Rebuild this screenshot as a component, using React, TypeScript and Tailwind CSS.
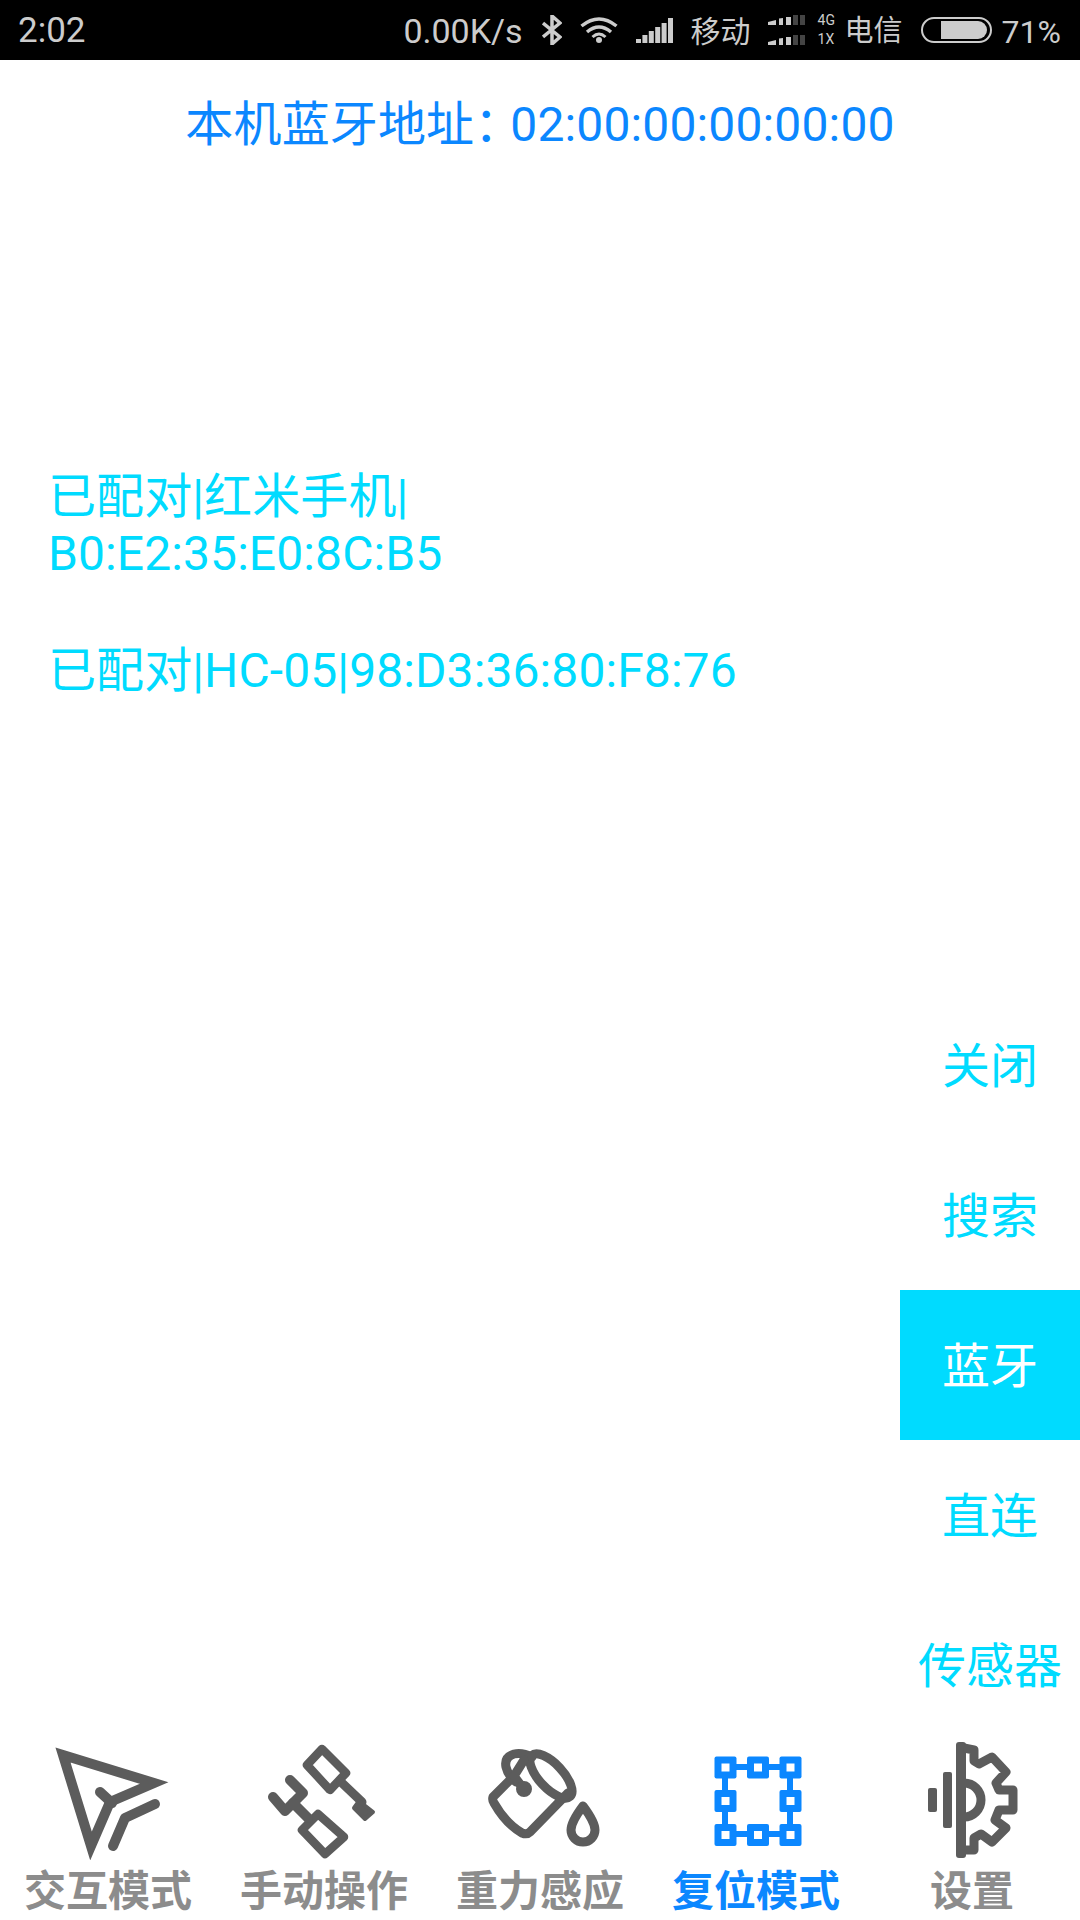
import type { ReactNode } from "react";

const tabs: { label: string; active?: boolean; icon: ReactNode }[] = [
  {
    label: "交互模式",
    icon: (
      <g fill="none" stroke="#5c5c5c" strokeWidth="10">
        <path d="M63 15L154 43L110 62L91 106Z" strokeMiterlimit="10" />
        <path d="M100 52L112 63" strokeLinecap="round" />
        <path d="M155 64L125 78L113 106" strokeLinecap="round" strokeLinejoin="round" />
      </g>
    ),
  },
  {
    label: "手动操作",
    icon: (
      <g fill="none" stroke="#5c5c5c" strokeWidth="8.500" strokeLinecap="round" strokeLinejoin="round">
        <path d="M106 9L130 33L114 50L91 25Z" />
        <path d="M125 42L146 62" strokeWidth="9" />
        <path d="M143 61L157 72L149 79L138 68Z" fill="#5c5c5c" strokeWidth="4" />
        <path d="M102 74L128 97L109 114L86 90Z" />
        <path d="M57 57L69 71L87 53L74 40" strokeWidth="10" />
        <path d="M77 63L92 78" strokeWidth="10" />
      </g>
    ),
  },
  {
    label: "重力感应",
    icon: (
      <g fill="none" stroke="#5c5c5c" strokeWidth="9" strokeLinecap="round" strokeLinejoin="round">
        <ellipse cx="119" cy="36" rx="28" ry="12" transform="rotate(47 119 36)" />
        <path d="M79 39L61 57Q60 60 62 63Q74 84 90 93Q95 95 98 92L136 53" />
        <path d="M100 17Q90 12 82 14Q72 17 74 27Q76 36 84 42" />
        <path d="M92 20L82 36L91 48" />
        <circle cx="92" cy="49" r="4" strokeWidth="8" fill="#5c5c5c" />
        <path d="M151 66Q163 82 163 90A12 12 0 0 1 139 90Q139 82 151 66Z" />
      </g>
    ),
  },
  {
    label: "复位模式",
    active: true,
    icon: (
      <g>
        <rect x="77" y="27" width="65" height="67" fill="none" stroke="#0b87ff" strokeWidth="6" />
        {[77.5, 110, 142.5].map((cx) =>
          [27.5, 61, 95].map((cy) =>
            cx === 110 && cy === 61 ? null : (
              <g key={`${cx}-${cy}`}>
                <rect x={cx - 11} y={cy - 11} width="22" height="22" rx="2" fill="#0b87ff" />
                <rect x={cx - 4} y={cy - 4} width="8" height="8" fill="#ffffff" />
              </g>
            ),
          ),
        )}
      </g>
    ),
  },
  {
    label: "设置",
    icon: (
      <g fill="#5c5c5c">
        <rect x="92" y="2" width="10" height="116" rx="3" />
        <rect x="79" y="32" width="9" height="56" rx="2" />
        <rect x="64" y="48" width="9" height="24" rx="2" />
        <path
          d="M100 8L110 10L110 21L115 24L128 17L142 32L132 43L135 50L149 50L149 70L135 70L131 80L142 88L128 102L117 94L110 98L110 110L100 110"
          fill="none"
          stroke="#5c5c5c"
          strokeWidth="9"
          strokeLinejoin="round"
        />
        <path d="M100 43A16 16 0 0 1 100 77" fill="none" stroke="#5c5c5c" strokeWidth="9" />
      </g>
    ),
  },
];

const sideItems = ["关闭", "搜索", "蓝牙", "直连", "传感器"];

function Bars({ className }: { className?: string }) {
  const heights = [4, 8, 12, 16, 20, 25];
  return (
    <svg viewBox="0 0 37 25" className={className}>
      {heights.map((h, i) => (
        <rect key={i} x={i * 6.4} y={25 - h} width="5" height={h} fill="#cccccc" />
      ))}
    </svg>
  );
}

function MiniBars() {
  return (
    <svg viewBox="0 0 37 10" className="w-[37px] h-[10px]">
      <path d="M0 7L8 5V10H0Z" fill="#cccccc" />
      <path d="M11 3.500L15 3V10H11Z" fill="#cccccc" />
      <rect x="18" y="2" width="5" height="8" fill="#cccccc" />
      <rect x="25" y="0" width="5" height="10" fill="#444444" />
      <rect x="32" y="0" width="5" height="10" fill="#444444" />
    </svg>
  );
}

function StatusBar() {
  return (
    <div className="h-[60px] shrink-0 bg-black text-[#cccccc] flex items-center justify-between pl-[18px] pr-[19px]">
      <span className="text-[35px] pt-[3px]">2:02</span>
      <div className="flex items-center">
        <span className="text-[34px] pt-[3px]">0.00K/s</span>
        <svg viewBox="0 0 20 30" className="w-[20px] h-[30px] ml-[19px]" fill="none" stroke="#cccccc" strokeWidth="3.500">
          <path d="M1 8L18 22L10 29V1L18 8L1 22" />
        </svg>
        <svg viewBox="0 0 38 26" className="w-[38px] h-[26px] ml-[18px]" fill="none" stroke="#cccccc" strokeWidth="3.500">
          <path d="M1.500 9Q19 -5 36.500 9" />
          <path d="M7 15Q19 5 31 15" />
          <path d="M12.500 20Q19 14 25.500 20" strokeWidth="3" />
          <circle cx="19" cy="23" r="3" fill="#cccccc" stroke="none" />
        </svg>
        <Bars className="w-[37px] h-[25px] ml-[18px]" />
        <span className="ml-[18px] text-[30px] pt-[3px]">移动</span>
        <div className="ml-[17px] flex flex-col gap-[10px]">
          <MiniBars />
          <MiniBars />
        </div>
        <div className="ml-[13px] flex flex-col text-[14px] leading-[19px] w-[20px]">
          <span>4G</span>
          <span>1X</span>
        </div>
        <span className="ml-[7px] text-[29px] pt-[3px]">电信</span>
        <div className="ml-[18px] w-[71px] h-[26px] rounded-full border-2 border-[#cccccc] flex items-center justify-end pr-[3px]">
          <div className="w-[46px] h-[18px] bg-[#cccccc] rounded-r-full" />
        </div>
        <span className="ml-[10px] text-[32px] pt-[3px]">71%</span>
      </div>
    </div>
  );
}

export default function App() {
  return (
    <div className="h-[1920px] w-[1080px] bg-white flex flex-col font-[Roboto,'Noto_Sans_CJK_SC',sans-serif]">
      <StatusBar />
      <div className="flex-1 flex min-h-0">
        <div className="flex-1 min-w-0">
          <div className="w-[1080px] mt-[37px] text-center text-[48px] leading-[56px] tracking-[0.15px] text-[#0b87ff]">
            本机蓝牙地址<span className="tracking-[-12px]">：</span>02:00:00:00:00:00
          </div>
          <div className="mt-[315px] pl-[48px] text-[48px] leading-[57px] tracking-[0.1px] text-[#00dbff]">
            <div>
              已配对|红米手机|
              <br />
              B0:E2:35:E0:8C:B5
            </div>
            <div className="mt-[60px]">已配对|HC-05|98:D3:36:80:F8:76</div>
          </div>
        </div>
        <div className="w-[180px] shrink-0 flex flex-col justify-end">
          {sideItems.map((item) => (
            <div
              key={item}
              className={
                item === "蓝牙"
                  ? "h-[150px] pt-[4px] flex items-center justify-center text-[48px] bg-[#00dbff] text-white"
                  : "h-[150px] pt-[4px] flex items-center justify-center text-[48px] text-[#00dbff]"
              }
            >
              {item}
            </div>
          ))}
        </div>
      </div>
      <div className="h-[180px] shrink-0 grid grid-cols-5">
        {tabs.map((tab) => (
          <div key={tab.label} className="flex flex-col items-center">
            <svg viewBox="0 0 216 120" className="w-[216px] h-[120px]">
              {tab.icon}
            </svg>
            <span
              className={
                tab.active
                  ? "mt-[10px] text-[42px] leading-[44px] font-bold text-[#0b87ff]"
                  : "mt-[10px] text-[42px] leading-[44px] font-bold text-[#8c8c8c]"
              }
            >
              {tab.label}
            </span>
          </div>
        ))}
      </div>
    </div>
  );
}
